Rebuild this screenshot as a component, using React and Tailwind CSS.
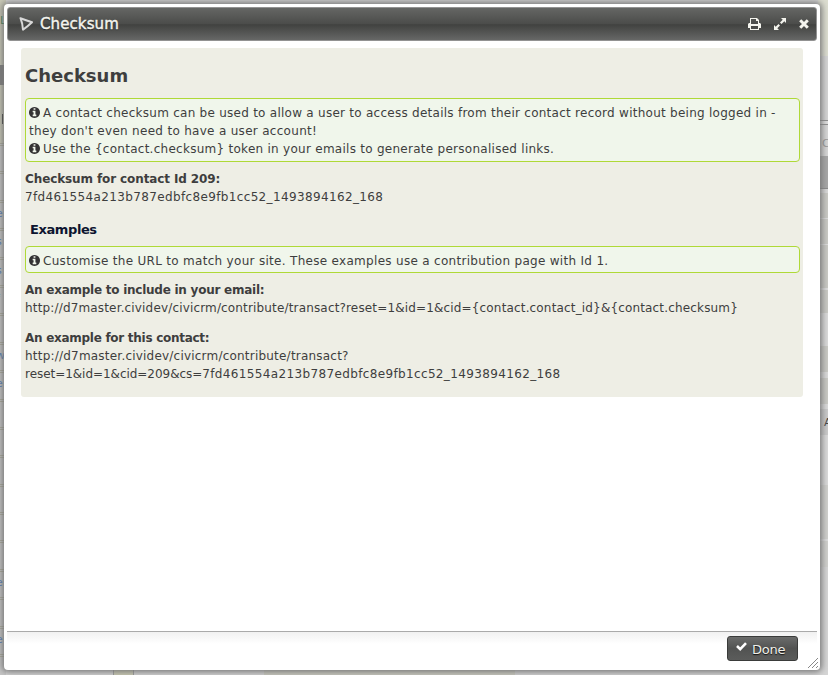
import React from "react";

const rowMarks = ["", "", "e", "s", "s", "f", "", "w", "e", ":", ":", ":", ":", ":", ":", "e", ":", "e", ":"];

const rightBands = [
  ["h-[56px]", "bg-[#dcddd0]"],
  ["h-[64px]", "bg-[#d4d4d4]"],
  ["h-[5px]", "bg-[#dedede] border-y border-[#8f8f8f]"],
  ["h-[31px]", "bg-[#d6d6d6] pl-[4px] pt-[10px] text-[#999]", "C"],
  ["h-[33px]", "bg-[#a6a6a6] border-b border-[#8a8a8a]"],
  ["h-[4px]", "bg-[#d8d8d8]"],
  ["h-[25px]", "bg-[#c9c9c4]"],
  ["h-[1px]", "bg-[#dddddd]"],
  ["h-[25px]", "bg-[#c9c9c4]"],
  ["h-[1px]", "bg-[#dddddd]"],
  ["h-[43px]", "bg-[#c9c9c4]"],
  ["h-[2px]", "bg-[#dddddd]"],
  ["h-[23px]", "bg-[#c9c9c4]"],
  ["h-[33px]", "bg-[#dadada]"],
  ["h-[26px]", "bg-[#c9c9c4]"],
  ["h-[6px]", "bg-[#dadada]"],
  ["h-[26px]", "bg-[#c9c9c4]"],
  ["h-[5px]", "bg-[#dadada]"],
  ["h-[26px]", "bg-[#c9c9c9] pl-[6px] pt-[5px] text-[#444]", "A"],
  ["h-[50px]", "bg-[#dadada]"],
  ["h-[54px]", "bg-[#d0d0cd]"],
  ["h-[2px]", "bg-[#dddddd]"],
  ["h-[26px]", "bg-[#d0d0cd]"],
];

function InfoIcon() {
  return (
    <svg viewBox="0 128 1536 1536" className="mr-[3px] inline-block h-[11px] w-[11px] align-[-1px]" fill="#333">
      <path d="M1024 1376v-160q0-14-9-23t-23-9h-96v-512q0-14-9-23t-23-9h-320q-14 0-23 9t-9 23v160q0 14 9 23t23 9h96v320h-96q-14 0-23 9t-9 23v160q0 14 9 23t23 9h448q14 0 23-9t9-23zm-128-896v-160q0-14-9-23t-23-9h-192q-14 0-23 9t-9 23v160q0 14 9 23t23 9h192q14 0 23-9t9-23zm640 416q0 209-103 385.5t-279.500 279.500-385.500 103-385.500-103-279.500-279.500-103-385.500 103-385.500 279.500-279.500 385.500-103 385.500 103 279.500 279.500 103 385.500z" />
    </svg>
  );
}

function Backdrop() {
  return (
    <div className="flex h-full justify-between overflow-hidden bg-[#d5d5d5] text-[11px] leading-[18px]">
      <div className="flex w-[6px] shrink-0 flex-col overflow-hidden bg-[#c6c6c6]">
        <div className="h-[65px] shrink-0 bg-[#c8c8b6] pt-[12px] text-[#2a7a4a]">L</div>
        <div className="h-[20px] shrink-0 bg-[#777]" />
        <div className="flex h-[58px] shrink-0 items-center bg-[#c8c8b6] pl-[2px] pt-[10px]">
          <div className="h-[10px] w-px bg-[#222]" />
        </div>
        {rowMarks.map((mark, i) => (
          <div key={i} className="flex h-[28.400px] shrink-0 flex-col text-[#4a78b8]">
            <div className="h-[3px] border-y border-[#a9a998]" />
            <span className="-ml-[4px] mt-[2px]">{mark}</span>
          </div>
        ))}
      </div>
      <div className="flex grow items-end">
        <div className="ml-[107px] h-[6px] w-[21px] border-x border-[#999] bg-[#ccccb4]" />
        <div className="ml-[130px] h-[6px] w-[251px] bg-[#cbcbc0]" />
      </div>
      <div className="w-[10px] shrink-0 overflow-hidden">
        {rightBands.map(([height, style, label], i) => (
          <div key={i} className={`${height} ${style}`}>
            {label}
          </div>
        ))}
      </div>
    </div>
  );
}

function TitleBar() {
  return (
    <div className="flex h-[34px] shrink-0 items-center rounded-[3px] border border-[#929292] bg-[linear-gradient(#656664,#4b4c4a_50%,#414240_52%,#666766)] pl-[11px] pr-[8px]">
      <svg width="15" height="14" viewBox="0 0 15 14" fill="none" stroke="#d8d8d8" strokeWidth="2" strokeLinejoin="round">
        <path d="M1.500 1.200Q7 3 13 5.200Q9 9 4 12.700Q3.500 6 1.500 1.200Z" />
      </svg>
      <span className="ml-[6px] grow text-[15px] leading-[18px] tracking-[0.100px] text-[#f5f5ee] [-webkit-text-stroke:0.400px_#f5f5ee] [text-shadow:0_1px_1px_#222]">Checksum</span>
      <svg width="13" height="12" viewBox="0 0 13 12" fill="#f4f4ee" fillRule="evenodd">
        <path d="M2 0h7l2 2v3h1l1 1v4h-2v2H2v-2H0V6l1-1h1zM3 1v5h7V3H8V1zM3 8v3h7V8z" />
      </svg>
      <svg className="ml-[13px]" width="12" height="12" viewBox="0 0 12 12" fill="#f4f4ee">
        <path d="M7 0h5v5l-1.700-1.700L7.500 6 6 4.500l2.700-2.800zM5 12H0V7l1.700 1.700L4.500 6 6 7.500l-2.700 2.800z" />
      </svg>
      <svg className="-mr-px ml-[13px]" width="10" height="10" viewBox="0 0 10 10" fill="none" stroke="#f4f4ee" strokeWidth="3">
        <path d="M1.200 1.200 8.800 8.800M8.800 1.200 1.200 8.800" />
      </svg>
    </div>
  );
}

function HelpBox({ children }) {
  return (
    <div className="w-[775px] rounded-[4px] border border-[#afd937] bg-[#f0f6eb] px-[3px] pb-[2px] pt-[5px]">
      {children}
    </div>
  );
}

export default function App() {
  return (
    <div className="relative h-[675px] w-[828px] overflow-hidden font-['DejaVu_Sans',sans-serif] text-[12px] leading-[18px] text-[#3e3e3e]">
      <Backdrop />
      <div className="absolute left-[4px] top-[4px] flex h-[666px] w-[816px] flex-col rounded-[4px] bg-white p-[3px] shadow-[0_0_6px_2px_#777]">
        <TitleBar />
        <div className="mx-[14px] mt-[7px] h-[349px] shrink-0 whitespace-nowrap rounded-[3px] bg-[#eeeee5] px-[4px] pt-[17px]">
          <h1 className="mb-[11px] text-[18px] font-bold leading-[22px]">Checksum</h1>
          <HelpBox>
            <p>
              <InfoIcon />
              <span className="tracking-[0.260px]">A contact checksum can be used to allow a user to access details from their contact record without being logged in -</span>
            </p>
            <p className="tracking-[0.300px]">they don't even need to have a user account!</p>
            <p className="mb-px">
              <InfoIcon />
              <span className="tracking-[0.270px]">Use the {"{contact.checksum}"} token in your emails to generate personalised links.</span>
            </p>
          </HelpBox>
          <p className="mt-[8px] font-bold tracking-[-0.110px]">Checksum for contact Id 209:</p>
          <p className="tracking-[0.360px]">7fd461554a213b787edbfc8e9fb1cc52_1493894162_168</p>
          <h2 className="mb-[7px] ml-[5px] mt-[15px] text-[13px] font-bold tracking-[-0.400px] text-[#0d1530]">Examples</h2>
          <HelpBox>
            <p>
              <InfoIcon />
              <span className="tracking-[0.300px]">Customise the URL to match your site. These examples use a contribution page with Id 1.</span>
            </p>
          </HelpBox>
          <p className="mt-[8px] font-bold tracking-[-0.250px]">An example to include in your email:</p>
          <p className="tracking-[0.160px]">http://d7master.cividev/civicrm/contribute/transact?reset=1&amp;id=1&amp;cid={"{contact.contact_id}"}&amp;{"{contact.checksum}"}</p>
          <p className="mt-[12px] font-bold tracking-[-0.280px]">An example for this contact:</p>
          <p className="tracking-[0.210px]">http://d7master.cividev/civicrm/contribute/transact?</p>
          <p className="tracking-[0.360px]">
            <span className="tracking-[-0.040px]">reset=1&amp;id=1&amp;cid=209&amp;cs=</span>7fd461554a213b787edbfc8e9fb1cc52_1493894162_168
          </p>
        </div>
        <div className="mt-auto flex h-[36px] justify-end border-t border-[#aaa] bg-[linear-gradient(#f1f1f1,#fff_12px)] pr-[19px] pt-[4px]">
          <button className="flex h-[25px] w-[71px] rounded-[3px] border border-[#3a3b3a] bg-[linear-gradient(#6b6c6b,#525352_50%,#5b5c5b)] pl-[8px] text-[13px] text-[#f0f0ea] [text-shadow:0_1px_1px_#111]">
            <svg className="mt-[5px]" width="11" height="9" viewBox="0 0 11 9" fill="none" stroke="#fff" strokeWidth="2.600">
              <path d="M1 4 4.200 7.100 10 1.200" />
            </svg>
            <span className="ml-[5px] mt-[4px] tracking-[-0.200px]">Done</span>
          </button>
        </div>
        <svg className="absolute bottom-[1px] right-[1px]" width="12" height="12" viewBox="0 0 12 12" stroke="#888" strokeWidth="1">
          <path d="M1 11 11 1M5 11 11 5M9 11 11 9" />
        </svg>
      </div>
    </div>
  );
}
